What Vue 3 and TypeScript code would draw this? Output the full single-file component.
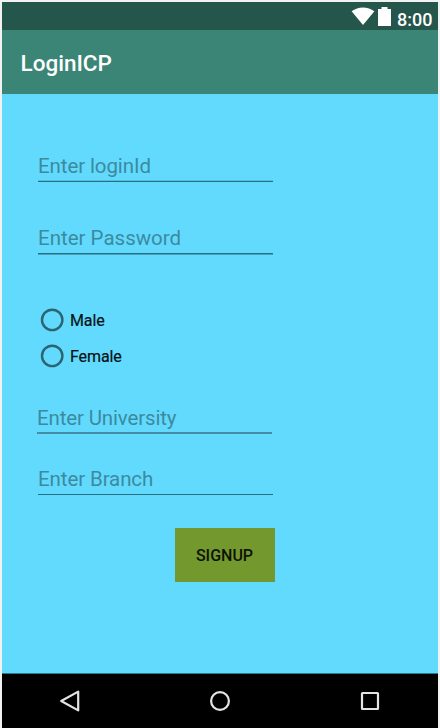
<script setup lang="ts">
import { reactive } from 'vue'

interface Field {
  key: 'loginId' | 'password' | 'university' | 'branch'
  hint: string
  type: string
}

const credentials: Field[] = [
  { key: 'loginId', hint: 'Enter loginId', type: 'text' },
  { key: 'password', hint: 'Enter Password', type: 'password' },
]
const education: Field[] = [
  { key: 'university', hint: 'Enter University', type: 'text' },
  { key: 'branch', hint: 'Enter Branch', type: 'text' },
]
const genders: string[] = ['Male', 'Female']

const form = reactive({ loginId: '', password: '', university: '', branch: '', gender: '' })
</script>

<template>
  <div class="screen">
    <header class="status">
      <svg class="wifi" viewBox="0 0 24 18"><path d="M.6 4.2C7.1-.9 16.9-.9 23.4 4.2L12 18z" /></svg>
      <svg class="battery" viewBox="0 0 13 19"><path d="M0 2h3.5V0h6v2H13v17H0z" /></svg>
      <span class="clock">8:00</span>
    </header>
    <div class="toolbar"><h1>LoginICP</h1></div>
    <form class="content" @submit.prevent>
      <input
        v-for="f in credentials"
        :key="f.key"
        v-model="form[f.key]"
        :class="['field', f.key]"
        :type="f.type"
        :placeholder="f.hint"
      />
      <div class="genders">
        <label v-for="g in genders" :key="g" class="option">
          <input v-model="form.gender" type="radio" name="gender" :value="g" />
          <svg viewBox="0 0 24 24">
            <circle class="ring" cx="12.2" cy="11.9" r="10.2" />
            <circle v-if="form.gender === g" class="dot" cx="12.2" cy="11.9" r="5" />
          </svg>
          <span>{{ g }}</span>
        </label>
      </div>
      <input
        v-for="f in education"
        :key="f.key"
        v-model="form[f.key]"
        :class="['field', f.key]"
        :type="f.type"
        :placeholder="f.hint"
      />
      <button class="signup" type="submit">SIGNUP</button>
    </form>
    <nav class="navbar">
      <svg viewBox="0 0 24 24"><path d="M20.2 2.6v18.8L3.2 12z" /></svg>
      <svg viewBox="0 0 24 24"><circle cx="12" cy="12" r="8.9" /></svg>
      <svg viewBox="0 0 24 24"><rect x="4" y="4" width="16" height="16" rx=".5" /></svg>
    </nav>
  </div>
</template>

<style>
body {
  background: #f2f2f2;
}
</style>

<style scoped>
.screen {
  box-sizing: border-box;
  height: 728px;
  padding: 2px 2px 0;
  display: flex;
  flex-direction: column;
  overflow: hidden;
  font-family: Roboto, sans-serif;
}
.status {
  height: 28px;
  background: #25564b;
  display: flex;
  justify-content: flex-end;
  align-items: flex-start;
  box-sizing: border-box;
  padding: 5px 5.5px 0 0;
  color: #fff;
}
.status svg {
  fill: #fff;
}
.wifi {
  width: 24px;
  height: 18px;
  margin-right: 3px;
}
.battery {
  width: 13px;
  height: 19px;
  margin-right: 6px;
}
.clock {
  font-size: 18px;
  font-weight: 500;
  line-height: 26px;
}
.toolbar {
  height: 64px;
  background: #3b8576;
  display: flex;
  align-items: center;
  padding-left: 18.5px;
}
h1 {
  margin: 2px 0 0;
  font-size: 22.5px;
  font-weight: 500;
  color: #fff;
}
.content {
  flex: 1;
  background: #62dafe;
  border-bottom: 1px solid #287c92;
  display: flex;
  flex-direction: column;
  align-items: flex-start;
  padding: 54px 36px 0;
}
.field {
  box-sizing: border-box;
  width: 235px;
  height: 34px;
  padding: 2px 0 0;
  border: 0;
  border-radius: 0;
  outline: none;
  background: linear-gradient(transparent 32px, #54bedd 32px, #54bedd 33px, #276f82 33px);
  font: 400 20.5px Roboto, sans-serif;
  letter-spacing: -0.1px;
  color: #111;
}
.field::placeholder {
  color: #3c8a9f;
  opacity: 1;
}
.password {
  height: 35px;
  padding-top: 1px;
  margin: 38px 0 -1px;
  letter-spacing: 0;
  background: linear-gradient(transparent 33px, #276f82 33px, #276f82 34px, #489fb8 34px);
}
.university {
  margin: 26px 0 0 -1px;
  letter-spacing: -0.15px;
  background: linear-gradient(transparent 32px, #438ea5 32px);
}
.branch {
  margin-top: 27px;
  background: linear-gradient(transparent 33px, #276f82 33px);
}
.genders {
  display: flex;
  flex-direction: column;
  margin: 48px 0 0 2px;
}
.option {
  position: relative;
  display: flex;
  align-items: center;
  gap: 6px;
  height: 36px;
  font-size: 16px;
  color: #071215;
}
.option input {
  position: absolute;
  opacity: 0;
  margin: 0;
}
.option svg {
  width: 24px;
  height: 24px;
}
.ring {
  fill: none;
  stroke: #2d6474;
  stroke-width: 2.4;
}
.dot {
  fill: #2d6474;
}
.option span {
  letter-spacing: -0.1px;
  -webkit-text-stroke: 0.2px #071215;
}
.signup {
  width: 100px;
  height: 54px;
  margin: 33px 0 0 136.5px;
  padding: 0;
  border: 0;
  background: #73982e;
  color: #0d1205;
  font: 500 16px Roboto, sans-serif;
}
.navbar {
  height: 54px;
  background: #000;
  display: flex;
  justify-content: center;
  align-items: center;
  gap: 126px;
}
.navbar svg {
  width: 24px;
  height: 24px;
  fill: none;
  stroke: #e4e4e4;
  stroke-width: 2.2;
  stroke-linejoin: round;
}
</style>
